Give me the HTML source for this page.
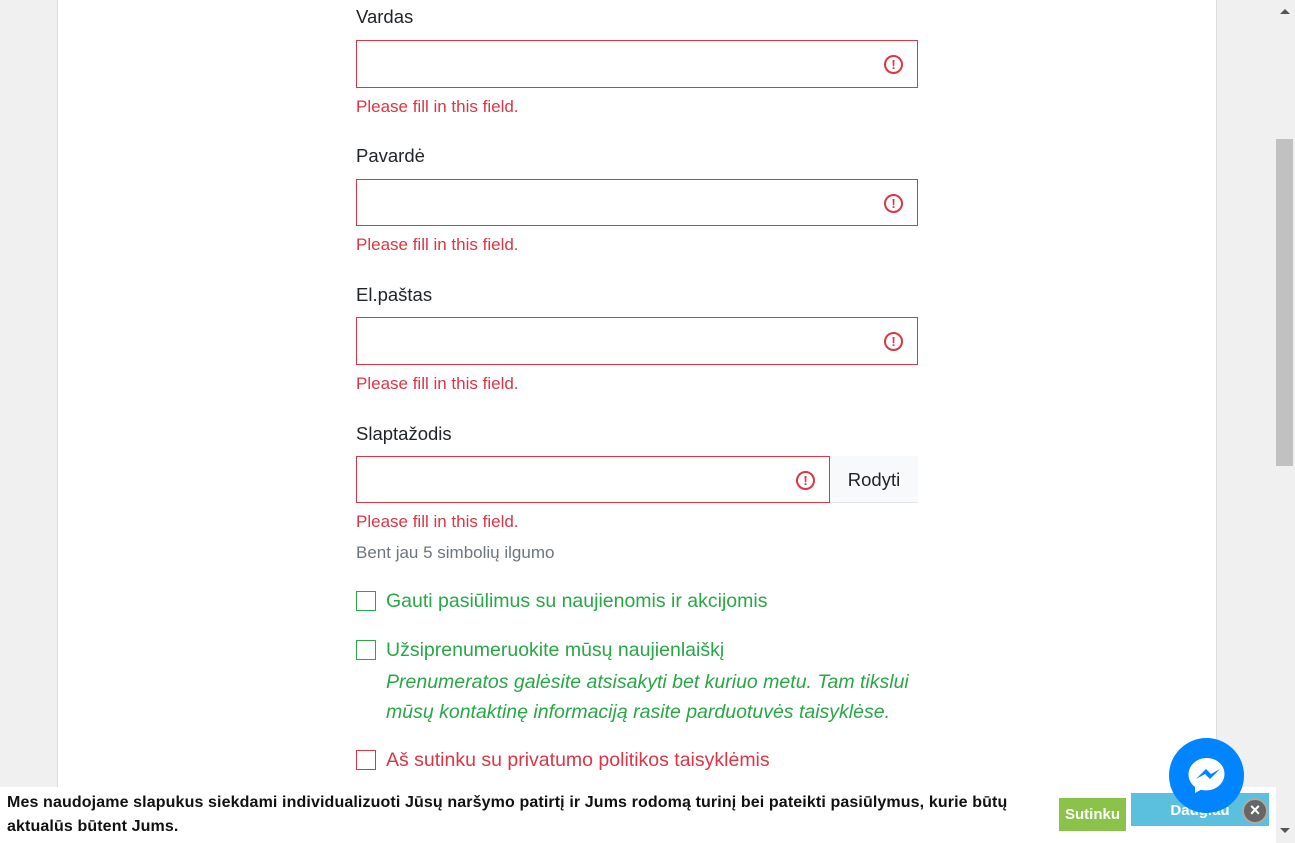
<!DOCTYPE html><html><head><meta charset="utf-8"><style>
*{box-sizing:border-box;margin:0;padding:0}
body{width:1295px;height:843px;overflow:hidden;background:#f0f0f0;font-family:"Liberation Sans",sans-serif;position:relative}
.main{position:absolute;left:57px;top:0;width:1160px;height:843px;background:#fff;border-left:1px solid #ddd;border-right:1px solid #ddd}
.abs{position:absolute}
.lbl{font-size:18.5px;color:#212529;left:356px}
.inp{left:356px;width:562px;height:48px;border:1px solid #dc3545;background:#fff}
.err{left:356px;font-size:17px;color:#dc3545}
.ic{position:absolute;right:14px;top:14px;width:19px;height:19px;border:2px solid #dc3545;border-radius:50%;color:#dc3545;font-size:13px;font-weight:bold;text-align:center;line-height:15px}
.cb{left:356px;width:20px;height:20px;border:1px solid #28a745}
.ct{left:386px;font-size:19.5px;color:#28a745}
</style></head><body>
<div class="main"></div>
<div class="abs lbl" style="top:6px">Vardas</div>
<div class="abs inp" style="top:40px"><span class="ic">!</span></div>
<div class="abs err" style="top:97px">Please fill in this field.</div>
<div class="abs lbl" style="top:145px">Pavardė</div>
<div class="abs inp" style="top:179px;height:47px"><span class="ic">!</span></div>
<div class="abs err" style="top:235px">Please fill in this field.</div>
<div class="abs lbl" style="top:284px">El.paštas</div>
<div class="abs inp" style="top:317px"><span class="ic">!</span></div>
<div class="abs err" style="top:374px">Please fill in this field.</div>
<div class="abs lbl" style="top:423px">Slaptažodis</div>
<div class="abs inp" style="top:456px;width:474px;height:47px"><span class="ic">!</span></div>
<div class="abs" style="left:830px;top:456px;width:88px;height:47px;background:#f8f9fa;border-bottom:1px solid #e5e5e5;font-size:18.5px;color:#212529;text-align:center;line-height:47px">Rodyti</div>
<div class="abs err" style="top:512px">Please fill in this field.</div>
<div class="abs" style="left:356px;top:543px;font-size:17px;color:#6c757d">Bent jau 5 simbolių ilgumo</div>
<div class="abs cb" style="top:591px"></div>
<div class="abs ct" style="top:590px">Gauti pasiūlimus su naujienomis ir akcijomis</div>
<div class="abs cb" style="top:640px"></div>
<div class="abs ct" style="top:639px">Užsiprenumeruokite mūsų naujienlaiškį</div>
<div class="abs ct" style="top:667px;font-style:italic;line-height:30px">Prenumeratos galėsite atsisakyti bet kuriuo metu. Tam tikslui<br>mūsų kontaktinę informaciją rasite parduotuvės taisyklėse.</div>
<div class="abs cb" style="top:750px;border-color:#dc3545"></div>
<div class="abs ct" style="top:749px;color:#dc3545">Aš sutinku su privatumo politikos taisyklėmis</div>
<div class="abs" style="left:0;top:787px;width:1276px;height:56px;background:#fff"></div>
<div class="abs" style="left:7px;top:791px;font-size:16px;font-weight:bold;color:#111;line-height:24px;letter-spacing:0.12px">Mes naudojame slapukus siekdami individualizuoti Jūsų naršymo patirtį ir Jums rodomą turinį bei pateikti pasiūlymus, kurie būtų<br>aktualūs būtent Jums.</div>
<div class="abs" style="left:1059px;top:798px;width:67px;height:33px;background:#8bc34a;color:#fff;font-weight:bold;font-size:15px;text-align:center;line-height:33px">Sutinku</div>
<div class="abs" style="left:1131px;top:793px;width:138px;height:33px;background:#5bc0de;color:#fff;font-weight:bold;font-size:15px;text-align:center;line-height:36px;overflow:hidden">Daugiau</div>
<div class="abs" style="left:1242px;top:798px;width:26px;height:26px;border-radius:50%;background:#666;border:2px solid #aaa;color:#fff;font-size:18px;text-align:center;line-height:21px;font-weight:bold">×</div>
<div class="abs" style="left:1169px;top:738px;width:75px;height:75px;border-radius:50%;background:#0084ff"></div>
<svg class="abs" style="left:1169px;top:738px" width="75" height="75" viewBox="0 0 75 75"><path d="M37.5 20c-10 0-18 7.5-18 16.5 0 5 2.5 9.5 6.5 12.5v6l6-3.3c1.7.5 3.5.7 5.5.7 10 0 18-7.5 18-16.5S47.5 20 37.5 20z" fill="#fff"/><path d="M27 41l10-10 5 5 9-5-10 10-5-5z" fill="#0084ff"/></svg>
<div class="abs" style="left:1276px;top:139px;width:17px;height:327px;background:#c1c1c1"></div>
<div class="abs" style="left:1280px;top:9px;border-left:5px solid transparent;border-right:5px solid transparent;border-bottom:5px solid #555;width:0;height:0"></div>
<div class="abs" style="left:1280px;top:828px;border-left:5px solid transparent;border-right:5px solid transparent;border-top:5px solid #555;width:0;height:0"></div>
</body></html>
